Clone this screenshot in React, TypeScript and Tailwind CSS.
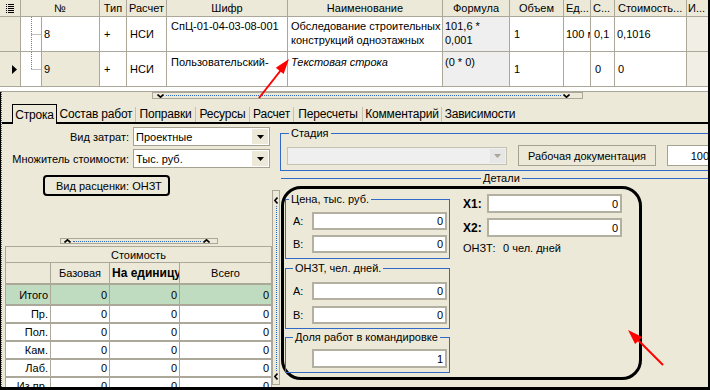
import React from "react";

const gridCols =
  "grid grid-cols-[21px_79px_27px_40px_121px_155px_67px_54px_27px_24px_72px_21px]";

function ListIcon() {
  return (
    <svg width="9" height="11" viewBox="0 0 9 11">
      <rect x="0" y="1" width="1" height="1" fill="#000" />
      <rect x="0" y="3" width="1" height="1" fill="#000" />
      <rect x="0" y="5" width="1" height="1" fill="#000" />
      <rect x="0" y="7" width="1" height="1" fill="#000" />
      <rect x="0" y="9" width="1" height="1" fill="#000" />
      <rect x="2" y="1" width="6" height="1" fill="#000" />
      <rect x="2" y="3" width="6" height="1" fill="#000" />
      <rect x="2" y="5" width="6" height="1" fill="#000" />
      <rect x="2" y="7" width="6" height="1" fill="#000" />
      <rect x="2" y="9" width="6" height="1" fill="#000" />
    </svg>
  );
}

function Tree({ last }: { last: boolean }) {
  return (
    <svg width="20" height="34" viewBox="0 0 20 34" className="shrink-0">
      <line
        x1="10.5"
        y1="0"
        x2="10.5"
        y2={last ? 17 : 34}
        stroke="#808080"
        strokeWidth="1"
        strokeDasharray="1 1"
      />
      <line x1="10.5" y1="17.5" x2="20" y2="17.5" stroke="#808080" strokeWidth="1" strokeDasharray="1 1" />
    </svg>
  );
}

function ChevDown() {
  return (
    <svg width="7" height="4" viewBox="0 0 7 4">
      <path d="M0.5 0.5 L3.5 3.2 L6.5 0.5" stroke="#000" strokeWidth="1.6" fill="none" />
    </svg>
  );
}

function ChevUp() {
  return (
    <svg width="7" height="4" viewBox="0 0 7 4">
      <path d="M0.5 3.5 L3.5 0.8 L6.5 3.5" stroke="#000" strokeWidth="1.6" fill="none" />
    </svg>
  );
}

function ChevLeft() {
  return (
    <svg width="4" height="7" viewBox="0 0 4 7">
      <path d="M3.5 0.5 L0.8 3.5 L3.5 6.5" stroke="#000" strokeWidth="1.6" fill="none" />
    </svg>
  );
}

function TriDown({ color }: { color: string }) {
  return (
    <svg width="7" height="4" viewBox="0 0 7 4">
      <polygon points="0,0 7,0 3.5,4" fill={color} />
    </svg>
  );
}

function TopGrid() {
  const hc = "flex items-center justify-center border-r border-[#aca899] overflow-hidden whitespace-nowrap";
  const hl = "flex items-center border-r border-[#aca899] overflow-hidden whitespace-nowrap";
  const c = "border-r border-[#aca899] overflow-hidden whitespace-nowrap";
  return (
    <div className="h-[92px] bg-white border-b border-[#aca899]">
      <div className={`${gridCols} h-[17px] bg-[#ece9d8] border-b border-[#aca899]`}>
        <div className={hc}>
          <ListIcon />
        </div>
        <div className={hc}>№</div>
        <div className={hc}>Тип</div>
        <div className={hc}>Расчет</div>
        <div className={hc}>Шифр</div>
        <div className={hc}>Наименование</div>
        <div className={hc}>Формула</div>
        <div className={hc}>Объем</div>
        <div className={`${hl} pl-[2px]`}>Ед...</div>
        <div className={`${hl} pl-[2px]`}>С...</div>
        <div className={`${hl} pl-[3px]`}>Стоимость...</div>
        <div className="flex items-center pl-[1px] overflow-hidden whitespace-nowrap">И...</div>
      </div>

      <div className={`${gridCols} h-[35px] border-b border-[#aca899]`}>
        <div className="bg-[#ece9d8] border-r border-[#aca899]" />
        <div className="flex border-r border-[#aca899]">
          <Tree last={false} />
          <div className="flex-1 border-l border-[#aca899] flex items-center pl-[2px]">8</div>
        </div>
        <div className={`${c} flex items-center pl-[4px]`}>+</div>
        <div className={`${c} flex items-center pl-[3px]`}>НСИ</div>
        <div className={`${c} pt-[2px] pl-[4px]`}>СпЦ-01-04-03-08-001</div>
        <div className={`${c} pt-[2px] pl-[3px]`}>
          Обследование строительных
          <br />
          конструкций одноэтажных
        </div>
        <div className={`${c} pt-[2px] pl-[2px] bg-[#efefef]`}>
          101,6 *
          <br />
          0,001
        </div>
        <div className={`${c} flex items-center pl-[4px]`}>1</div>
        <div className={`${c} flex items-center pl-[2px]`}>100 м</div>
        <div className={`${c} flex items-center pl-[3px]`}>0,1</div>
        <div className={`${c} flex items-center pl-[2px]`}>0,1016</div>
        <div className="bg-[#f0eee5]" />
      </div>

      <div className={`${gridCols} h-[35px] border-b border-[#aca899]`}>
        <div className="bg-[#ece9d8] border-r border-[#aca899] flex items-center pl-[12px]">
          <svg width="5" height="9" viewBox="0 0 5 9">
            <polygon points="0,0 5,4.5 0,9" fill="#000" />
          </svg>
        </div>
        <div className="flex border-r border-[#aca899]">
          <Tree last={true} />
          <div className="flex-1 border-l border-[#aca899] flex items-center pl-[2px] bg-[#ece9d8]">9</div>
        </div>
        <div className={`${c} flex items-center pl-[4px]`}>+</div>
        <div className={`${c} flex items-center pl-[3px]`}>НСИ</div>
        <div className={`${c} pt-[3px] pl-[4px]`}>Пользовательский-</div>
        <div className={`${c} pt-[3px] pl-[3px] italic`}>Текстовая строка</div>
        <div className={`${c} pt-[3px] pl-[2px] bg-[#efefef]`}>(0 * 0)</div>
        <div className={`${c} flex items-center pl-[4px]`}>1</div>
        <div className={`${c}`} />
        <div className={`${c} flex items-center pl-[4px]`}>0</div>
        <div className={`${c} flex items-center pl-[3px]`}>0</div>
        <div className="bg-[#f0eee5]" />
      </div>
    </div>
  );
}

function Splitter() {
  return (
    <div className="h-[8px] flex">
      <div className="ml-[150px] w-[431px] h-[7px] border border-[#aca899] flex items-center px-[4px]">
        <ChevDown />
        <div className="flex-1 mx-[2px] border-t border-dotted border-[#3169c6]" />
        <ChevDown />
        <div className="w-[8px]" />
      </div>
    </div>
  );
}

function Tabs() {
  const sep = <div className="w-px h-[15px] bg-[#c5c2b2]" />;
  const t = "h-[16px] flex items-center justify-center whitespace-nowrap text-[12px] tracking-[-0.2px]";
  return (
    <div className="flex items-end h-[24px] border-b-2 border-black">
      <div className="ml-[10px] -mb-[2px] h-[20px] w-[45px] border border-b-0 border-black bg-[#ece9d8] flex items-center justify-center text-[12px] tracking-[-0.2px]">
        Строка
      </div>
      <div className="flex items-center h-[16px]">
        <div className={`${t} w-[78px]`}>Состав работ</div>
        {sep}
        <div className={`${t} w-[59px]`}>Поправки</div>
        {sep}
        <div className={`${t} w-[53px]`}>Ресурсы</div>
        {sep}
        <div className={`${t} w-[43px]`}>Расчет</div>
        {sep}
        <div className={`${t} w-[68px]`}>Пересчеты</div>
        {sep}
        <div className={`${t} w-[78px]`}>Комментарий</div>
        {sep}
        <div className={`${t} w-[76px]`}>Зависимости</div>
      </div>
    </div>
  );
}

function Combo({ text }: { text: string }) {
  return (
    <div className="ml-[4px] w-[137px] h-[19px] bg-white border border-[#a5a292] flex items-center">
      <span className="pl-[2px] flex-1 whitespace-nowrap">{text}</span>
      <div className="w-[16px] h-[15px] mr-[1px] bg-[#ece9d8] flex items-center justify-center">
        <TriDown color="#000" />
      </div>
    </div>
  );
}

function LeftPanel() {
  const vc = "flex items-center justify-end pr-[2px] border-r border-[#aca899]";
  const rows = ["Пр.", "Пол.", "Кам.", "Лаб.", "Из пр."];
  return (
    <div className="w-[270px] flex flex-col pt-[3px]">
      <div className="flex items-center h-[19px]">
        <div className="w-[127px] text-right whitespace-nowrap">Вид затрат:</div>
        <Combo text="Проектные" />
      </div>
      <div className="flex items-center h-[19px] mt-[3px]">
        <div className="w-[127px] text-right whitespace-nowrap">Множитель стоимости:</div>
        <Combo text="Тыс. руб." />
      </div>
      <div className="mt-[7px] ml-[41px] w-[127px] h-[21px] border-2 border-black rounded-[4px] flex items-center pl-[11px] whitespace-nowrap">
        Вид расценки: ОНЗТ
      </div>
      <div className="mt-[42px] ml-[58px] w-[158px] h-[6px] border border-[#aca899] flex items-center px-[3px]">
        <ChevUp />
        <div className="flex-1 mx-[2px] border-t border-dotted border-[#3169c6]" />
        <ChevUp />
        <div className="w-[4px]" />
      </div>
      <div className="mt-[2px] ml-[3px] w-[267px] flex-1 overflow-hidden">
        <div className="h-[17px] border border-[#aca899] bg-[#ece9d8] flex items-center justify-center">
          Стоимость
        </div>
        <div className="grid grid-cols-[46px_59px_70px_92px] h-[22px] border-b-2 border-[#aca899] bg-[#ece9d8]">
          <div className="border-l border-r border-[#aca899]" />
          <div className="border-r border-[#aca899] flex items-center justify-center">Базовая</div>
          <div className="border-r border-[#aca899] flex items-center pl-[2px] overflow-hidden whitespace-nowrap font-bold text-[12px]">
            На единицу
          </div>
          <div className="border-r border-[#aca899] flex items-center justify-center">Всего</div>
        </div>
        <div className="grid grid-cols-[46px_59px_70px_92px] h-[21px] border-b-2 border-[#aca899] bg-[#c0dcc0]">
          <div className={`${vc} border-l`}>Итого</div>
          <div className={vc}>0</div>
          <div className={vc}>0</div>
          <div className={vc}>0</div>
        </div>
        {rows.map((r) => (
          <div
            key={r}
            className="grid grid-cols-[46px_59px_70px_92px] h-[18px] border-b-2 border-[#aca899] bg-white"
          >
            <div className={`${vc} border-l`}>{r}</div>
            <div className={vc}>0</div>
            <div className={vc}>0</div>
            <div className={vc}>0</div>
          </div>
        ))}
      </div>
    </div>
  );
}

function VSplitter() {
  return (
    <div className="w-[8px] flex flex-col">
      <div className="mt-[66px] h-[195px] border border-[#aca899] flex flex-col items-center pt-[6px] pb-[4px]">
        <ChevLeft />
        <div className="flex-1 my-[2px] border-l border-dotted border-[#3169c6]" />
        <ChevLeft />
      </div>
    </div>
  );
}

function Input({ value, cls }: { value: string; cls: string }) {
  return (
    <div className={`bg-white border-2 border-[#b3b0a2] flex items-center justify-end pr-[2px] ${cls}`}>
      {value}
    </div>
  );
}

function RightPanel() {
  return (
    <div className="flex-1 min-w-0 overflow-hidden flex flex-col">
      <fieldset className="mt-[2px] w-[450px] h-[45px] min-w-0 shrink-0 border border-[#3169c6]">
        <legend className="ml-[8px] px-[2px] leading-[14px]">Стадия</legend>
        <div className="flex items-center mt-[5px] h-[21px]">
          <div className="ml-[6px] w-[220px] h-[18px] bg-[#efefef] border border-[#c5c2b2] flex items-center justify-end">
            <div className="w-[15px] h-[14px] mr-[1px] bg-[#e6e6e6] flex items-center justify-center">
              <TriDown color="#a7a697" />
            </div>
          </div>
          <div className="ml-[11px] w-[138px] h-[21px] border border-[#a5a292] bg-[#ece9d8] flex items-center justify-center whitespace-nowrap">
            Рабочая документация
          </div>
          <div className="ml-[11px] w-[46px] h-[21px] bg-white border border-[#a5a292] flex items-center justify-end pr-[3px] shrink-0">
            100
          </div>
        </div>
      </fieldset>

      <div className="h-[14px] flex items-center shrink-0">
        <div className="ml-[1px] w-[200px] h-px bg-[#3169c6]" />
        <div className="px-[2px] leading-[14px]">Детали</div>
        <div className="flex-1 h-px bg-[#3169c6]" />
      </div>

      <div className="mt-[1px] ml-[1px] w-[361px] h-[194px] shrink-0 border-[3px] border-black rounded-[20px] flex">
        <div className="ml-[1px] w-[165px] flex flex-col">
          <fieldset className="mt-[3px] h-[67px] min-w-0 border border-[#3169c6]">
            <legend className="ml-[3px] px-[2px] leading-[14px]">Цена, тыс. руб.</legend>
            <div className="flex items-center mt-[6px] pl-[7px]">
              <div className="w-[19px]">A:</div>
              <Input value="0" cls="w-[135px] h-[18px]" />
            </div>
            <div className="flex items-center mt-[5px] pl-[7px]">
              <div className="w-[19px]">B:</div>
              <Input value="0" cls="w-[135px] h-[18px]" />
            </div>
          </fieldset>
          <fieldset className="mt-[2px] h-[68px] min-w-0 border border-[#3169c6]">
            <legend className="ml-[7px] px-[2px] leading-[14px]">ОНЗТ, чел. дней.</legend>
            <div className="flex items-center mt-[7px] pl-[7px]">
              <div className="w-[19px]">A:</div>
              <Input value="0" cls="w-[135px] h-[18px]" />
            </div>
            <div className="flex items-center mt-[6px] pl-[7px]">
              <div className="w-[19px]">B:</div>
              <Input value="0" cls="w-[135px] h-[18px]" />
            </div>
          </fieldset>
          <fieldset className="mt-[1px] h-[43px] min-w-0 border border-[#3169c6]">
            <legend className="ml-[7px] px-[2px] leading-[14px]">Доля работ в командировке</legend>
            <div className="flex items-center mt-[5px] pl-[26px]">
              <Input value="1" cls="w-[135px] h-[19px]" />
            </div>
          </fieldset>
        </div>
        <div className="ml-[13px] flex flex-col">
          <div className="flex items-center mt-[5px] h-[19px]">
            <div className="w-[24px] font-bold text-[12px]">X1:</div>
            <Input value="0" cls="w-[135px] h-[19px]" />
          </div>
          <div className="flex items-center mt-[5px] h-[19px]">
            <div className="w-[24px] font-bold text-[12px]">X2:</div>
            <Input value="0" cls="w-[135px] h-[19px]" />
          </div>
          <div className="flex items-center mt-[4px] leading-[14px] whitespace-nowrap">
            <div className="w-[40px]">ОНЗТ:</div>
            <div>0 чел. дней</div>
          </div>
        </div>
      </div>
    </div>
  );
}

function Arrows() {
  return (
    <svg className="absolute left-0 top-0 pointer-events-none" width="710" height="390" viewBox="0 0 710 390">
      <line x1="259" y1="98" x2="281" y2="70" stroke="#ff0000" strokeWidth="2" />
      <polygon points="289,59 283.6,73.9 275.8,67.7" fill="#ff0000" />
      <line x1="663" y1="365" x2="637" y2="339" stroke="#ff0000" strokeWidth="2" />
      <polygon points="628,330 642.1,337.1 635.1,344.1" fill="#ff0000" />
    </svg>
  );
}

export default function App() {
  return (
    <div className="relative w-[710px] h-[390px] overflow-hidden bg-[#ece9d8] border-r-2 border-b-[3px] border-black font-['Liberation_Sans',Arial,sans-serif] text-[11px] leading-[14px] text-black">
      <TopGrid />
      <div className="flex h-[295px]">
        <div className="w-[2px] flex shrink-0">
          <div className="w-px bg-black" />
          <div className="w-px border-l border-dotted border-[#3169c6]" />
        </div>
        <div className="flex-1 flex flex-col min-w-0">
          <Splitter />
          <Tabs />
          <div className="flex h-[263px]">
            <LeftPanel />
            <VSplitter />
            <RightPanel />
          </div>
        </div>
      </div>
      <Arrows />
    </div>
  );
}
